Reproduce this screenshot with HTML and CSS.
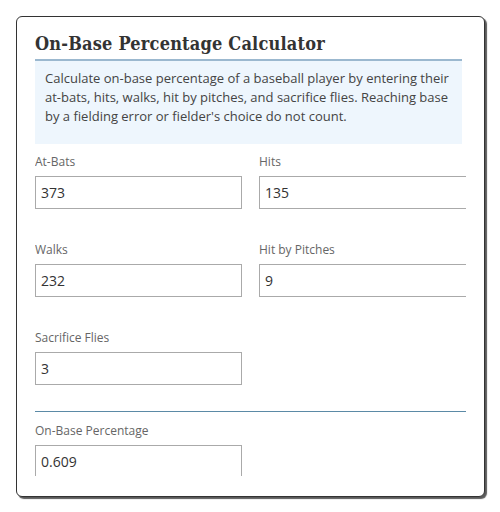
FILE: index.html
```html
<!DOCTYPE html>
<html>
<head>
    <title>On-Base Percentage Calculator</title>
    <link rel="stylesheet" href="styles.css">
</head>
<body>
    <div class="card">
        <div class="content">
            <div class="header">
                <h1 class="title">On-Base Percentage Calculator</h1>
                <p class="intro">Calculate on-base percentage of a baseball player by entering their at-bats, hits, walks, hit by pitches, and sacrifice flies. Reaching base by a fielding error or fielder's choice do not count.</p>
            </div>

            <div class="fields">
                <div class="field">
                    <label for="atBats">At-Bats</label>
                    <input id="atBats" type="text" value="373">
                </div>
                <div class="field">
                    <label for="hits">Hits</label>
                    <input id="hits" type="text" value="135">
                </div>
                <div class="field">
                    <label for="walks">Walks</label>
                    <input id="walks" type="text" value="232">
                </div>
                <div class="field">
                    <label for="hbp">Hit by Pitches</label>
                    <input id="hbp" type="text" value="9">
                </div>
                <div class="field">
                    <label for="sacFlies">Sacrifice Flies</label>
                    <input id="sacFlies" type="text" value="3">
                </div>
            </div>

            <div class="divider"></div>

            <div class="fields">
                <div class="field">
                    <label for="obp">On-Base Percentage</label>
                    <input id="obp" type="text" value="0.609" readonly>
                </div>
            </div>
        </div>
    </div>
</body>
</html>
```

FILE: styles.css
```css
body {
    font-family: "Open Sans", Arial, sans-serif;
    background-color: #fff;
    color: #333;
    margin: 0;
    padding: 16px;
}
.card {
    box-sizing: border-box;
    width: 469px;
    height: 481px;
    padding: 12px 18px 20px 18px;
    border: 1px solid #333;
    border-radius: 6px;
    box-shadow: 2px 2px 1px #5a5a5a;
    background-color: #fff;
}
.content {
    height: 100%;
    overflow: hidden;
}
.header {
    margin-right: 4px;
}
.title {
    margin: 0;
    padding-bottom: 1px;
    font-family: "DejaVu Serif Condensed", "DejaVu Serif", serif;
    font-size: 18px;
    font-weight: bold;
    letter-spacing: 0.2px;
    line-height: 29px;
    color: #333;
    border-bottom: 2px solid #9bb8cf;
}
.intro {
    margin: 0;
    padding: 8px 10px 18px 10px;
    background-color: #eef6fd;
    font-size: 13px;
    line-height: 19px;
    color: #444;
}
.fields {
    display: grid;
    grid-template-columns: 207px 209px;
    column-gap: 17px;
    row-gap: 33px;
    margin-top: 10px;
}
.field label {
    display: block;
    font-size: 12px;
    line-height: 16px;
    color: #666;
    margin-bottom: 6px;
}
.field input {
    box-sizing: border-box;
    display: block;
    width: 100%;
    height: 33px;
    margin: 0;
    padding: 0 5px;
    border: 1px solid #aaa;
    border-radius: 0;
    font-family: "Open Sans", Arial, sans-serif;
    font-size: 14px;
    color: #333;
    background-color: #fff;
}
.divider {
    margin-top: 26px;
    border-top: 1px solid #5b8aa6;
}
.divider + .fields {
    margin-top: 11px;
}
```
